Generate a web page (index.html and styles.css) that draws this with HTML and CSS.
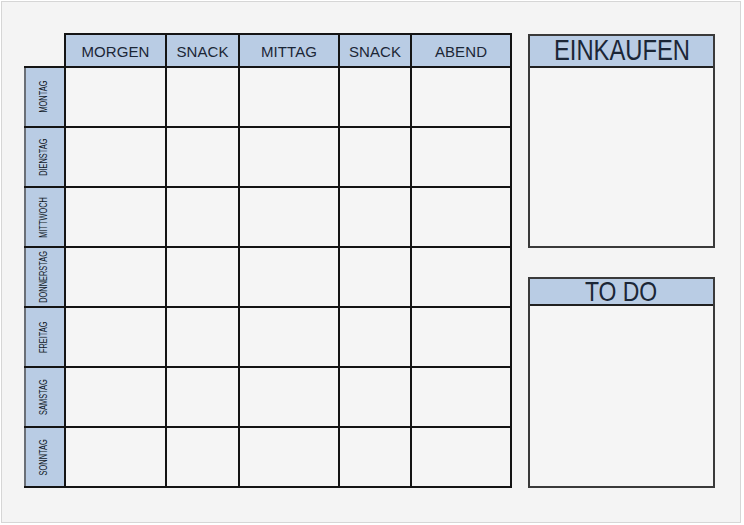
FILE: index.html
```html
<!DOCTYPE html>
<html lang="de">
<head>
<meta charset="utf-8">
<title>Wochenplan</title>
<link rel="stylesheet" href="styles.css">
</head>
<body>
<div class="frame">
  <div class="plan">
    <div class="corner"></div>
    <div class="head">MORGEN</div>
    <div class="head">SNACK</div>
    <div class="head">MITTAG</div>
    <div class="head">SNACK</div>
    <div class="head">ABEND</div>

    <div class="day"><span>MONTAG</span></div>
    <div class="cell"></div><div class="cell"></div><div class="cell"></div><div class="cell"></div><div class="cell"></div>
    <div class="day"><span>DIENSTAG</span></div>
    <div class="cell"></div><div class="cell"></div><div class="cell"></div><div class="cell"></div><div class="cell"></div>
    <div class="day"><span>MITTWOCH</span></div>
    <div class="cell"></div><div class="cell"></div><div class="cell"></div><div class="cell"></div><div class="cell"></div>
    <div class="day"><span>DONNERSTAG</span></div>
    <div class="cell"></div><div class="cell"></div><div class="cell"></div><div class="cell"></div><div class="cell"></div>
    <div class="day"><span>FREITAG</span></div>
    <div class="cell"></div><div class="cell"></div><div class="cell"></div><div class="cell"></div><div class="cell"></div>
    <div class="day"><span>SAMSTAG</span></div>
    <div class="cell"></div><div class="cell"></div><div class="cell"></div><div class="cell"></div><div class="cell"></div>
    <div class="day"><span>SONNTAG</span></div>
    <div class="cell"></div><div class="cell"></div><div class="cell"></div><div class="cell"></div><div class="cell"></div>
  </div>

  <div class="side">
    <section class="panel panel-shop">
      <div class="panel-head"><span>EINKAUFEN</span></div>
      <div class="panel-body"></div>
    </section>
    <section class="panel panel-todo">
      <div class="panel-head"><span>TO DO</span></div>
      <div class="panel-body"></div>
    </section>
  </div>
</div>
</body>
</html>
```

FILE: styles.css
```css
html, body {
  margin: 0;
  padding: 0;
  background: #ffffff;
}

.frame {
  box-sizing: border-box;
  margin: 1px;
  width: 740px;
  height: 522px;
  border: 1px solid #d6d6d6;
  background: #f4f4f4;
  padding: 31px 0 0 22px;
  display: flex;
  align-items: flex-start;
  gap: 16px;
  font-family: "Liberation Sans", Arial, sans-serif;
  color: #1b2636;
}

.plan {
  display: grid;
  grid-template-columns: 40px 99px 71px 98px 70px 98px;
  grid-template-rows: 31px repeat(7, 58px);
  gap: 2px;
  padding: 2px 2px 2px 0;
  background: #141414;
}

.corner {
  background: #f4f4f4;
  margin-top: -2px;
}

.head {
  background: #b9cce4;
  display: flex;
  align-items: center;
  justify-content: center;
  font-size: 15px;
  letter-spacing: 0.1px;
  padding-top: 1px;
}

.day {
  box-sizing: border-box;
  background: #b9cce4;
  border-left: 2px solid #6a6f76;
  display: flex;
  align-items: center;
  justify-content: center;
  padding-right: 3px;
}

.day span {
  writing-mode: vertical-rl;
  transform: rotate(180deg) scaleY(0.74);
  font-size: 10px;
  line-height: 1;
  color: #111a28;
}

.cell {
  background: #f5f5f5;
}

.side {
  display: flex;
  flex-direction: column;
  gap: 29px;
  margin-top: 1px;
}

.panel {
  box-sizing: border-box;
  width: 187px;
  border: 2px solid #3a3a3a;
  display: flex;
  flex-direction: column;
  background: #f5f5f5;
}

.panel-shop { height: 214px; }
.panel-todo { height: 211px; }

.panel-head {
  background: #b9cce4;
  border-bottom: 2px solid #202020;
  display: flex;
  align-items: center;
  justify-content: center;
}

.panel-shop .panel-head { height: 30px; }
.panel-todo .panel-head { height: 25px; }

.panel-head span {
  display: inline-block;
  font-size: 29px;
  line-height: 0.8;
  transform: scaleX(0.82);
  color: #1b2636;
}

.panel-todo .panel-head span {
  font-size: 28px;
  padding-top: 2px;
}

.panel-body {
  flex: 1;
}
```
